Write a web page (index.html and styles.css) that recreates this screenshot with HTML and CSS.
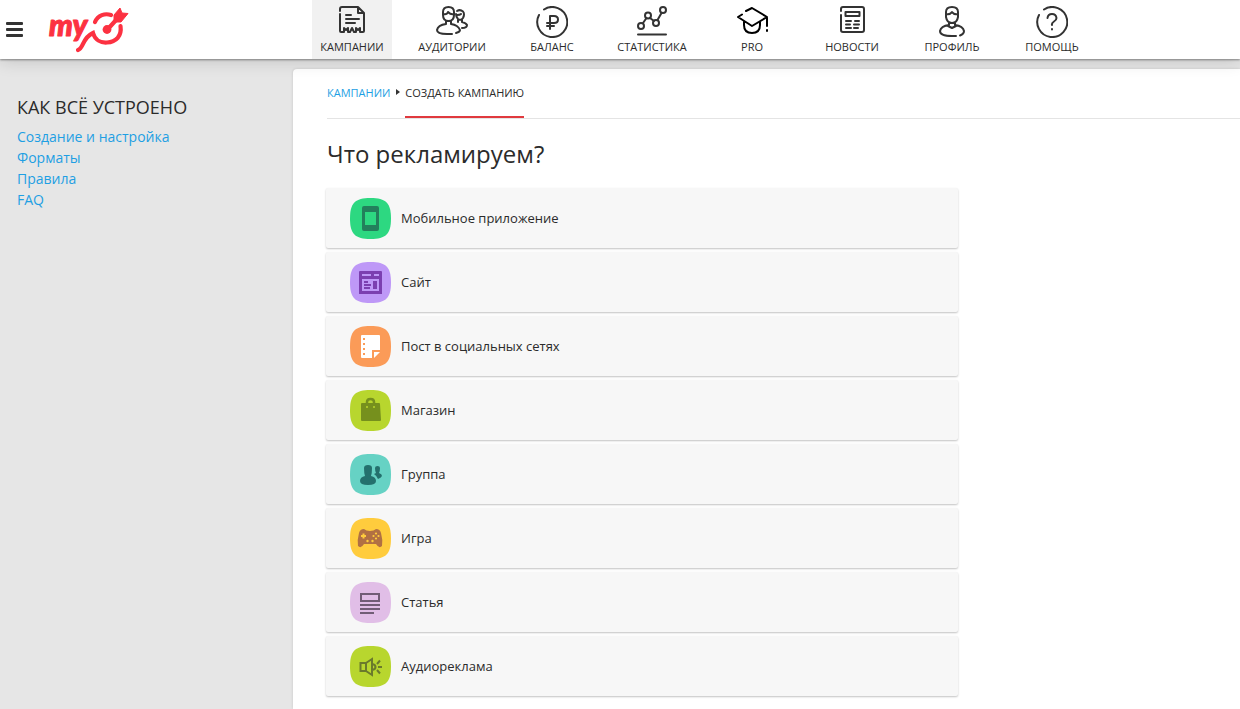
FILE: index.html
```html
<!DOCTYPE html>
<html lang="ru">
<head>
<meta charset="utf-8">
<title>Создать кампанию</title>
<link rel="stylesheet" href="styles.css">
</head>
<body>
<header class="topbar">
  <div class="brand">
    <button class="burger" type="button" aria-label="Меню"><span></span><span></span><span></span></button>
    <a class="logo" href="#" aria-label="myTarget">
      <svg width="84" height="50" viewBox="0 0 84 50">
        <text class="logo-text" x="2" y="31">my</text>
        <g fill="none" stroke="#fc3141" stroke-width="4.200" stroke-linecap="round">
          <path d="M31 45C37 43 35 33 46 28C48 35 54 38 60 37.500C69 37 75 31 73.500 21"/>
          <path d="M48 17C51 10 58 8 64 10"/>
          <path d="M60 25L70 14"/>
        </g>
        <circle cx="60" cy="24.500" r="4.400" fill="#fc3141"/>
        <path d="M67 17L67 10L73 3L75 8L81 8.500L74 17Z" fill="#fc3141" stroke="#fc3141" stroke-linejoin="round"/>
      </svg>
    </a>
  </div>
  <nav class="nav">
    <a class="nav-item active" href="#">
      <svg viewBox="0 0 32 32"><path d="M4 8V25Q4 26 5 26H8V22L10 24L12 22V26H14L16 22L18 26H20V22L22 24L24 22V26H27Q28 26 28 25V7L22 1H6Q4 1 4 3V5M22 1V7H28"/><path d="M10 9H15M10 13H23M10 17H19"/></svg>
      <span>КАМПАНИИ</span>
    </a>
    <a class="nav-item" href="#">
      <svg viewBox="0 0 32 32"><path d="M7 6Q7 1 12.500 1T18 6V9Q18 15 12.500 15T7 9ZM7 8Q11 9 12 6Q15 9 18 8M10 15V18Q2 19 1 24Q1 28 11 28H16M15 15V18Q22 19 24 24Q24 26 20 27"/><path d="M21 5Q24 3 27 5.500Q29 8 27 12Q25 15 22 13Q20 11 20 8M21 9Q24 9 25 8M22 14V16M26 13V16Q30 17 31 19Q31 22 26 22"/></svg>
      <span>АУДИТОРИИ</span>
    </a>
    <a class="nav-item" href="#">
      <svg viewBox="0 0 32 32"><path d="M8 3.500A15 15 0 1 1 3 9M14 23V10H18Q22 10 22 13.500T18 17H11M11 20H18"/></svg>
      <span>БАЛАНС</span>
    </a>
    <a class="nav-item" href="#">
      <svg viewBox="0 0 32 32"><circle cx="5" cy="20" r="3"/><circle cx="12" cy="9.500" r="3"/><circle cx="20" cy="17" r="3"/><circle cx="27" cy="4" r="3"/><path d="M7 17L10.500 12M14 12L18 15M21.500 14L25.500 7M2 28.500H30"/></svg>
      <span>СТАТИСТИКА</span>
    </a>
    <a class="nav-item pro" href="#">
      <svg viewBox="0 0 32 32"><path d="M10 5L16 2L31 11L16 20L2 11L6 8.500M8 16V19Q8 27 16 27T24 19V16M31 12V20M31 24V25"/></svg>
      <span>PRO</span>
    </a>
    <a class="nav-item" href="#">
      <svg viewBox="0 0 32 32"><path d="M5 5V3Q5 1 7 1H26Q28 1 28 3V24Q28 26 26 26H7Q5 26 5 24V9M9.500 6H23.500V10H9.500ZM10 15H15M10 18.500H14M10 22H15M19 15H23M18 18.500H23M18 22H22"/></svg>
      <span>НОВОСТИ</span>
    </a>
    <a class="nav-item" href="#">
      <svg viewBox="0 0 32 32"><path d="M10 6Q10 1 16 1T22 6V11Q21 17 16 17T10 11ZM10 8Q14 9 16 6Q18 9 22 8M13 16V19Q5 20 4 25Q4 30 16 30H20M19 16V19Q27 20 28 25Q28 28 24 29.500M12 20L16 22L20 20"/></svg>
      <span>ПРОФИЛЬ</span>
    </a>
    <a class="nav-item" href="#">
      <svg viewBox="0 0 32 32"><path d="M8 3.500A15 15 0 1 1 3 9M11.500 12Q12 8 16 8T20.500 12Q20.500 14 18 15.500T16 19M16 23V23.500"/></svg>
      <span>ПОМОЩЬ</span>
    </a>
  </nav>
</header>
<div class="layout">
  <aside class="sidebar">
    <h2>КАК ВСЁ УСТРОЕНО</h2>
    <ul>
      <li><a href="#">Создание и настройка</a></li>
      <li><a href="#">Форматы</a></li>
      <li><a href="#">Правила</a></li>
      <li><a href="#">FAQ</a></li>
    </ul>
  </aside>
  <main class="content">
    <nav class="crumbs"><a href="#">КАМПАНИИ</a><i class="arrow"></i><span class="current">СОЗДАТЬ КАМПАНИЮ</span></nav>
    <h1>Что рекламируем?</h1>
    <div class="options">
      <button class="option" type="button">
        <svg viewBox="0 0 41 41"><path fill="#2dd881" d="M0 20.500C0 5 5 0 20.500 0S41 5 41 20.500S36 41 20.500 41S0 36 0 20.500Z"/><path fill="#23805c" fill-rule="evenodd" d="M14 8H27Q29 8 29 10V31Q29 33 27 33H14Q12 33 12 31V10Q12 8 14 8ZM15 14V27H26V14Z"/></svg>
        <span>Мобильное приложение</span>
      </button>
      <button class="option" type="button">
        <svg viewBox="0 0 41 41"><path fill="#be98f7" d="M0 20.500C0 5 5 0 20.500 0S41 5 41 20.500S36 41 20.500 41S0 36 0 20.500Z"/><path fill="#7b3fb0" fill-rule="evenodd" d="M10 9H31Q32 9 32 10V32H9V10Q9 9 10 9ZM12 12V14H21V12ZM24 12V14H29V12ZM12 17V29H29V17Z"/><path fill="#7b3fb0" d="M14 19H18V21H14ZM14 22H21V24H14ZM14 25H20V27H14ZM23 19H27V27H23Z"/></svg>
        <span>Сайт</span>
      </button>
      <button class="option" type="button">
        <svg viewBox="0 0 41 41"><path fill="#fb9b58" d="M0 20.500C0 5 5 0 20.500 0S41 5 41 20.500S36 41 20.500 41S0 36 0 20.500Z"/><path fill="#fff" d="M12 9H29Q30 9 30 10V24H22V32H12Q11 32 11 31V10Q11 9 12 9ZM24 26H30L24 32Z"/><path fill="#fb9b58" d="M13 12H15V14H13ZM13 17H15V19H13ZM13 22H15V24H13ZM13 27H15V29H13Z"/></svg>
        <span>Пост в социальных сетях</span>
      </button>
      <button class="option" type="button">
        <svg viewBox="0 0 41 41"><path fill="#b8d62e" d="M0 20.500C0 5 5 0 20.500 0S41 5 41 20.500S36 41 20.500 41S0 36 0 20.500Z"/><path fill="#76901d" d="M12 13H29Q30 13 30 14L31 30Q31 31 30 31H12Q11 31 11 30V14Q11 13 12 13Z"/><path fill="none" stroke="#76901d" stroke-width="2.500" d="M17 15V12Q17 9 20.500 9T24 12V15"/><circle cx="17" cy="17" r="1" fill="#b8d62e"/><circle cx="24" cy="17" r="1" fill="#b8d62e"/></svg>
        <span>Магазин</span>
      </button>
      <button class="option" type="button">
        <svg viewBox="0 0 41 41"><path fill="#66d2c4" d="M0 20.500C0 5 5 0 20.500 0S41 5 41 20.500S36 41 20.500 41S0 36 0 20.500Z"/><path fill="#24706d" d="M14 14Q14 11 18 11T22 14Q22 19 21 22Q26 23 26 27Q26 31 18 31T10 27Q10 23 15 22Q14 19 14 14ZM25 14Q25 12 27.500 12T30 14Q30 17 29 19Q32 20 32 22Q31 24 28 25Q27 22 24 20L26 19Q25 17 25 14Z"/></svg>
        <span>Группа</span>
      </button>
      <button class="option" type="button">
        <svg viewBox="0 0 41 41"><path fill="#ffcc3d" d="M0 20.500C0 5 5 0 20.500 0S41 5 41 20.500S36 41 20.500 41S0 36 0 20.500Z"/><path fill="#b17043" d="M14 11Q16 13 20 13T26 11Q30 11 31 15Q33 22 32 28Q29 31 26 26H14Q11 31 8 28Q7 22 9 15Q10 11 14 11Z"/><path fill="none" stroke="#ffcc3d" stroke-width="2" d="M11 18H16M13.500 15.500V20.500"/><g fill="#ffcc3d"><circle cx="26" cy="15.500" r="1.100"/><circle cx="26" cy="20.500" r="1.100"/><circle cx="23.500" cy="18" r="1.100"/><circle cx="28.500" cy="18" r="1.100"/><circle cx="17.500" cy="23" r="1.200"/><circle cx="22.500" cy="23" r="1.200"/></g></svg>
        <span>Игра</span>
      </button>
      <button class="option" type="button">
        <svg viewBox="0 0 41 41"><path fill="#e1bee7" d="M0 20.500C0 5 5 0 20.500 0S41 5 41 20.500S36 41 20.500 41S0 36 0 20.500Z"/><path fill="none" stroke="#715d76" stroke-width="2" d="M11 12H29V19H11ZM10 23H30M10 27H30M10 31H24"/></svg>
        <span>Статья</span>
      </button>
      <button class="option" type="button">
        <svg viewBox="0 0 41 41"><path fill="#b8d62e" d="M0 20.500C0 5 5 0 20.500 0S41 5 41 20.500S36 41 20.500 41S0 36 0 20.500Z"/><path fill="none" stroke="#6b7a2c" stroke-width="2" d="M10.500 17H16V25H10.500ZM16 17L22 13V29L16 25M22 18Q25.500 18.500 25.500 21T22 24M27 18L30 14.500M28 21H32M27 24L30 27.500"/></svg>
        <span>Аудиореклама</span>
      </button>
    </div>
  </main>
</div>
</body>
</html>
```
FILE: styles.css
```css
* { box-sizing: border-box; }

body {
  margin: 0;
  min-height: 100vh;
  display: flex;
  flex-direction: column;
  background: #e6e6e6;
  color: #2b2b2b;
  font-family: "Open Sans", "Noto Sans", sans-serif;
}

a { color: #1e9fe3; text-decoration: none; }

.topbar {
  display: flex;
  height: 59px;
  background: #fff;
  box-shadow: 0 1px 2px rgba(0, 0, 0, 0.4), 0 2px 16px rgba(0, 0, 0, 0.16);
  z-index: 1;
}

.brand {
  display: flex;
  align-items: center;
  gap: 24px;
  width: 312px;
  padding-left: 6px;
}

.burger {
  display: flex;
  flex-direction: column;
  gap: 3px;
  width: 17px;
  padding: 0;
  border: 0;
  background: none;
}

.burger span { height: 3px; border-radius: 1px; background: #333; }

.logo svg { display: block; overflow: visible; }

.logo-text {
  font: italic 900 30px Lato, sans-serif;
  fill: #fc3141;
  stroke: #fc3141;
  stroke-width: 1px;
  stroke-linejoin: round;
}

.nav { display: flex; gap: 20px; }

.nav-item {
  display: flex;
  flex-direction: column;
  align-items: center;
  gap: 1px;
  width: 80px;
  padding-top: 6px;
  color: #2b2b2b;
  font-size: 11px;
  line-height: 16px;
}

.nav-item.active { background: #f1f1f1; }

.nav-item svg {
  width: 32px;
  height: 32px;
  fill: none;
  stroke: #333;
  stroke-width: 2;
  stroke-linecap: round;
  stroke-linejoin: round;
}

.nav-item.pro svg { stroke: #000; }

.layout { flex: 1; display: flex; }

.sidebar { width: 293px; padding: 36px 17px; }

.sidebar h2 {
  margin: 0 0 6px;
  font-size: 18px;
  font-weight: 400;
  line-height: 25px;
}

.sidebar ul { margin: 0; padding: 0; list-style: none; }

.sidebar li { font-size: 14px; line-height: 21px; }

.content {
  flex: 1;
  margin-top: 10px;
  padding-left: 33px;
  padding-bottom: 12px;
  background: #fff;
  border-top-left-radius: 4px;
  box-shadow: 0 0 3px rgba(0, 0, 0, 0.15);
}

.crumbs {
  display: flex;
  height: 50px;
  margin-left: 1px;
  border-bottom: 1px solid #e4e4e4;
  font-size: 11px;
  line-height: 48px;
}

.arrow {
  align-self: center;
  margin: 0 5px 4px 6px;
  border: 3px solid transparent;
  border-left: 4px solid #333;
  border-right: 0;
}

.current { border-bottom: 2px solid #e0393e; }

h1 {
  margin: 0;
  padding: 17px 0 16px 1px;
  font-size: 24px;
  font-weight: 400;
  line-height: 36px;
}

.options { display: flex; flex-direction: column; gap: 4px; max-width: 632px; }

.option {
  display: flex;
  align-items: center;
  gap: 10px;
  height: 60px;
  padding: 0 24px;
  border: 0;
  border-radius: 2px;
  background: #f7f7f7;
  box-shadow: 0 1px 2px rgba(0, 0, 0, 0.24);
  color: #2b2b2b;
  font: 13px "Open Sans", "Noto Sans", sans-serif;
}

.option svg { width: 41px; height: 41px; }
```
